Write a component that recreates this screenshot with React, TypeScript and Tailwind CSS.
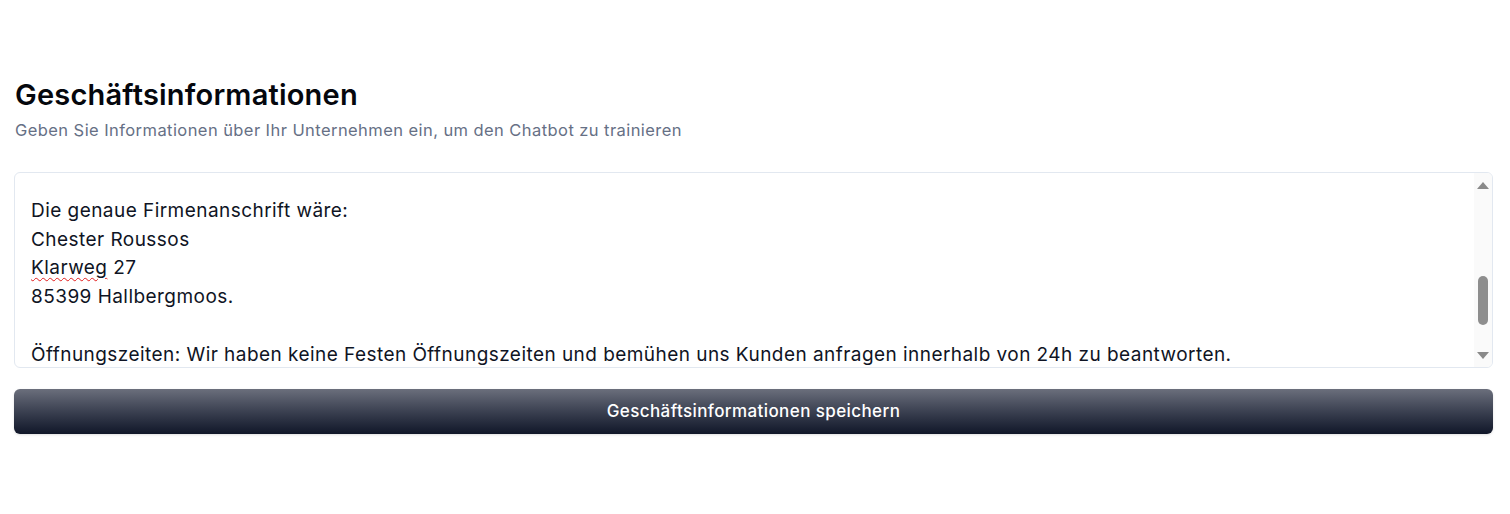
import React from "react";

export default function App() {
  const lines = [
    "",
    "Die genaue Firmenanschrift wäre:",
    "Chester Roussos",
    "KLARWEG",
    "85399 Hallbergmoos.",
    "",
    "Öffnungszeiten: Wir haben keine Festen Öffnungszeiten und bemühen uns Kunden anfragen innerhalb von 24h zu beantworten.",
    "",
  ];
  return (
    <div
      className="w-[1510px] h-[514px] bg-white pl-[14px] pr-[17px] pt-[77px]"
      style={{ fontFamily: "Inter, 'Noto Sans', sans-serif" }}
    >
      <h1 className="text-[29px] leading-[36px] font-semibold text-[#05070d] tracking-[0.2px] pl-px">
        Geschäftsinformationen
      </h1>
      <p className="text-[16.5px] leading-[24px] text-[#667085] tracking-[0.43px] pl-px mt-[5px]">
        Geben Sie Informationen über Ihr Unternehmen ein, um den Chatbot zu trainieren
      </p>
      <div className="mt-[30px] h-[196px] border border-[#e2e8f0] rounded-[6px] flex overflow-hidden">
        <div className="flex-1 overflow-hidden pl-[16px]">
          <div className="mt-[-5px] text-[19px] leading-[28.8px] tracking-[0.45px] text-[#0f1424]">
            {lines.map((l, i) =>
              l === "KLARWEG" ? (
                <div key={i} className="h-[28.8px] whitespace-nowrap">
                  <span className="underline decoration-wavy decoration-[#e11d1d] decoration-1 underline-offset-[3px]">
                    Klarweg
                  </span>{" "}
                  27
                </div>
              ) : (
                <div key={i} className="h-[28.8px] whitespace-nowrap">
                  {l}
                </div>
              )
            )}
          </div>
        </div>
        <div className="w-[18px] bg-[#fafafa] flex flex-col items-center justify-between pt-[9px] pb-[8px]">
          <svg width="12" height="7" viewBox="0 0 12 7">
            <path d="M6 0 L12 7 L0 7 Z" fill="#8a8a8a" />
          </svg>
          <div className="flex-1 w-full flex flex-col items-center pt-[87px]">
            <div className="w-[10px] h-[49px] rounded-full bg-[#8e8e8e]" />
          </div>
          <svg width="12" height="7" viewBox="0 0 12 7">
            <path d="M0 0 L12 0 L6 7 Z" fill="#8a8a8a" />
          </svg>
        </div>
      </div>
      <button className="mt-[21px] w-full h-[45px] rounded-[6px] bg-gradient-to-b from-[#6b6f7c] to-[#111729] text-white text-[17px] tracking-[0.4px] font-medium shadow-sm">
        Geschäftsinformationen speichern
      </button>
    </div>
  );
}
